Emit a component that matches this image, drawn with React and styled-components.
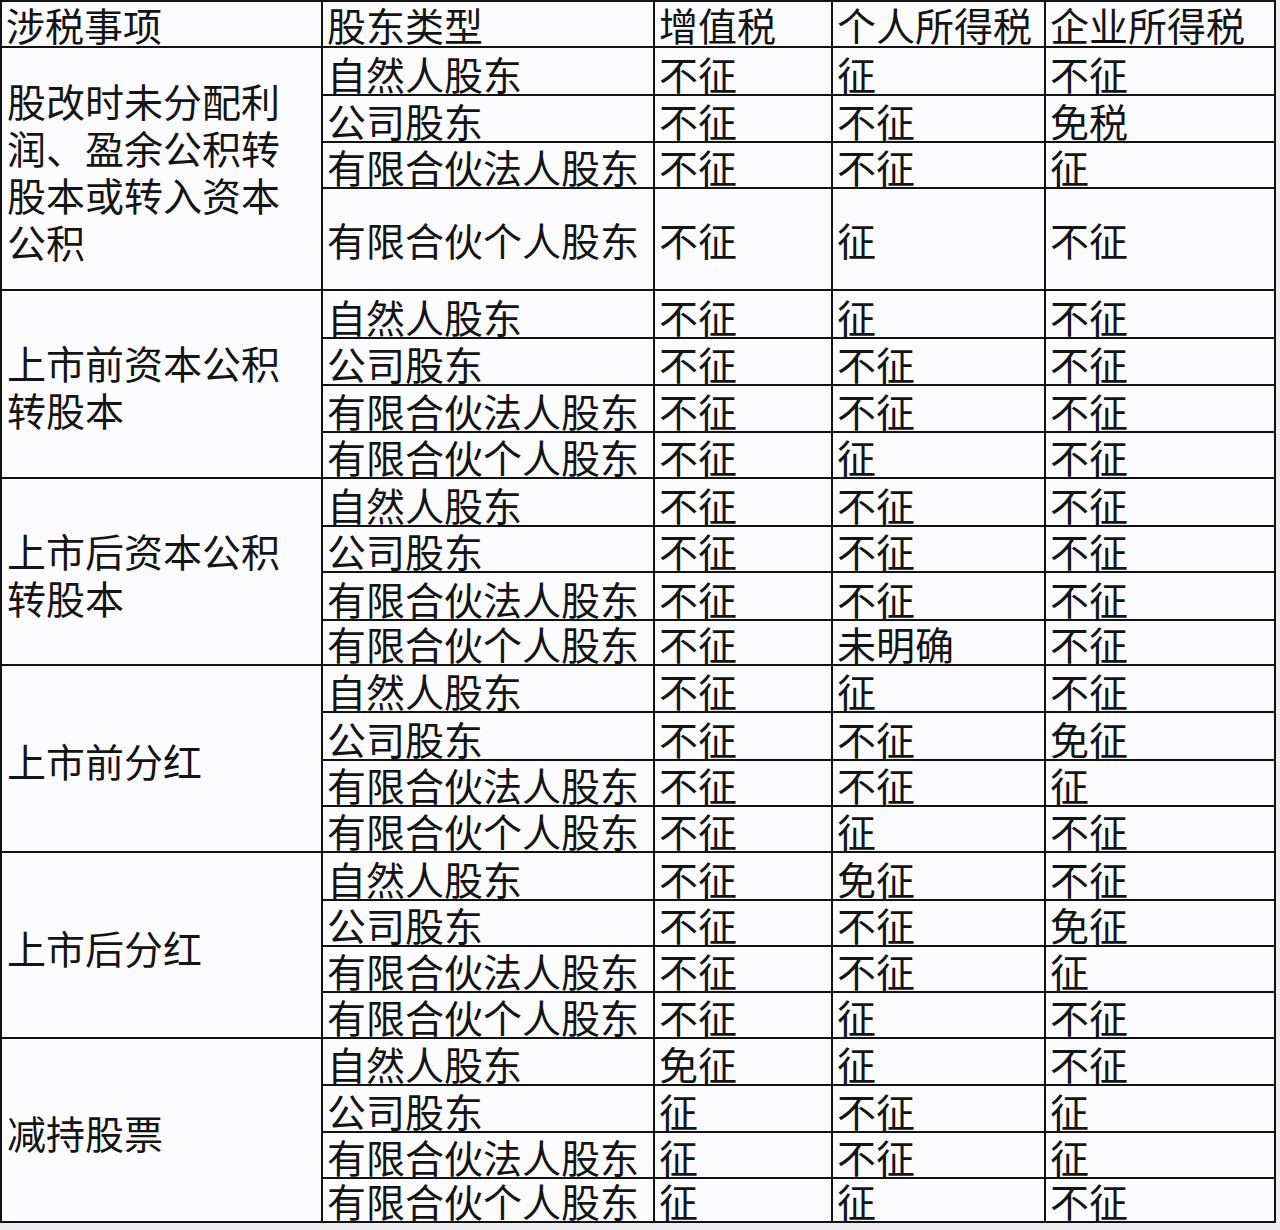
import React from 'react'
import styled, { createGlobalStyle } from 'styled-components'

const GlobalStyle = createGlobalStyle`
    html, body {
        margin: 0;
        padding: 0;
        background: #ededf1;
    }
    body {
        font-family: "Noto Sans CJK SC", "Noto Sans", sans-serif;
    }
`

// measured row tracks: header, then 4 rows per group (group 1 has a tall last row)
const rowTracks = [
    44,
    46, 45, 44, 100,
    46, 45, 45, 44,
    46, 44, 46, 43,
    45, 46, 44, 44,
    46, 44, 44, 44,
    45, 45, 44, 42,
]

const Sheet = styled.div`
    display: grid;
    grid-template-columns: 319px 330px 176px 211px 228px;
    grid-template-rows: ${rowTracks.map(h => h + 'px').join(' ')};
    gap: 2px;
    padding: 2px;
    width: max-content;
    background: #121212;
    color: #141414;
    font-family: "Noto Sans CJK SC", sans-serif;
    font-weight: 400;
    font-size: 39px;
`

const Cell = styled.div`
    background: #fcfcfe;
    display: flex;
    align-items: ${props => props.center ? 'center' : 'flex-end'};
    padding: 0 0 ${props => props.center ? '0' : '1px'} 4px;
    line-height: 1;
    white-space: nowrap;
`

const HeadCell = styled(Cell)`
    padding-bottom: 2px;
`

const TopicCell = styled.div`
    grid-row: span 4;
    background: #fcfcfe;
    display: flex;
    align-items: center;
    padding: 4px 0 0 5px;
`

const TopicText = styled.span`
    display: block;
    max-width: 290px;
    line-height: 47px;
`

const headers = ['涉税事项', '股东类型', '增值税', '个人所得税', '企业所得税']

const groups = [
    {
        topic: '股改时未分配利润、盈余公积转股本或转入资本公积',
        rows: [
            ['自然人股东', '不征', '征', '不征'],
            ['公司股东', '不征', '不征', '免税'],
            ['有限合伙法人股东', '不征', '不征', '征'],
            ['有限合伙个人股东', '不征', '征', '不征'],
        ],
        tallLast: true,
    },
    {
        topic: '上市前资本公积转股本',
        rows: [
            ['自然人股东', '不征', '征', '不征'],
            ['公司股东', '不征', '不征', '不征'],
            ['有限合伙法人股东', '不征', '不征', '不征'],
            ['有限合伙个人股东', '不征', '征', '不征'],
        ],
    },
    {
        topic: '上市后资本公积转股本',
        rows: [
            ['自然人股东', '不征', '不征', '不征'],
            ['公司股东', '不征', '不征', '不征'],
            ['有限合伙法人股东', '不征', '不征', '不征'],
            ['有限合伙个人股东', '不征', '未明确', '不征'],
        ],
    },
    {
        topic: '上市前分红',
        rows: [
            ['自然人股东', '不征', '征', '不征'],
            ['公司股东', '不征', '不征', '免征'],
            ['有限合伙法人股东', '不征', '不征', '征'],
            ['有限合伙个人股东', '不征', '征', '不征'],
        ],
    },
    {
        topic: '上市后分红',
        rows: [
            ['自然人股东', '不征', '免征', '不征'],
            ['公司股东', '不征', '不征', '免征'],
            ['有限合伙法人股东', '不征', '不征', '征'],
            ['有限合伙个人股东', '不征', '征', '不征'],
        ],
    },
    {
        topic: '减持股票',
        rows: [
            ['自然人股东', '免征', '征', '不征'],
            ['公司股东', '征', '不征', '征'],
            ['有限合伙法人股东', '征', '不征', '征'],
            ['有限合伙个人股东', '征', '征', '不征'],
        ],
    },
]

const App = () => {
    return (
        <>
            <GlobalStyle />
            <Sheet>
                {headers.map(h => <HeadCell key={h}>{h}</HeadCell>)}
                {groups.map((g, gi) => (
                    <React.Fragment key={gi}>
                        <TopicCell><TopicText>{g.topic}</TopicText></TopicCell>
                        {g.rows.map((row, ri) => {
                            const tall = g.tallLast && ri === g.rows.length - 1
                            return row.map((text, ci) => (
                                <Cell key={ri + '-' + ci} center={tall}>{text}</Cell>
                            ))
                        })}
                    </React.Fragment>
                ))}
            </Sheet>
        </>
    )
}

export default App
